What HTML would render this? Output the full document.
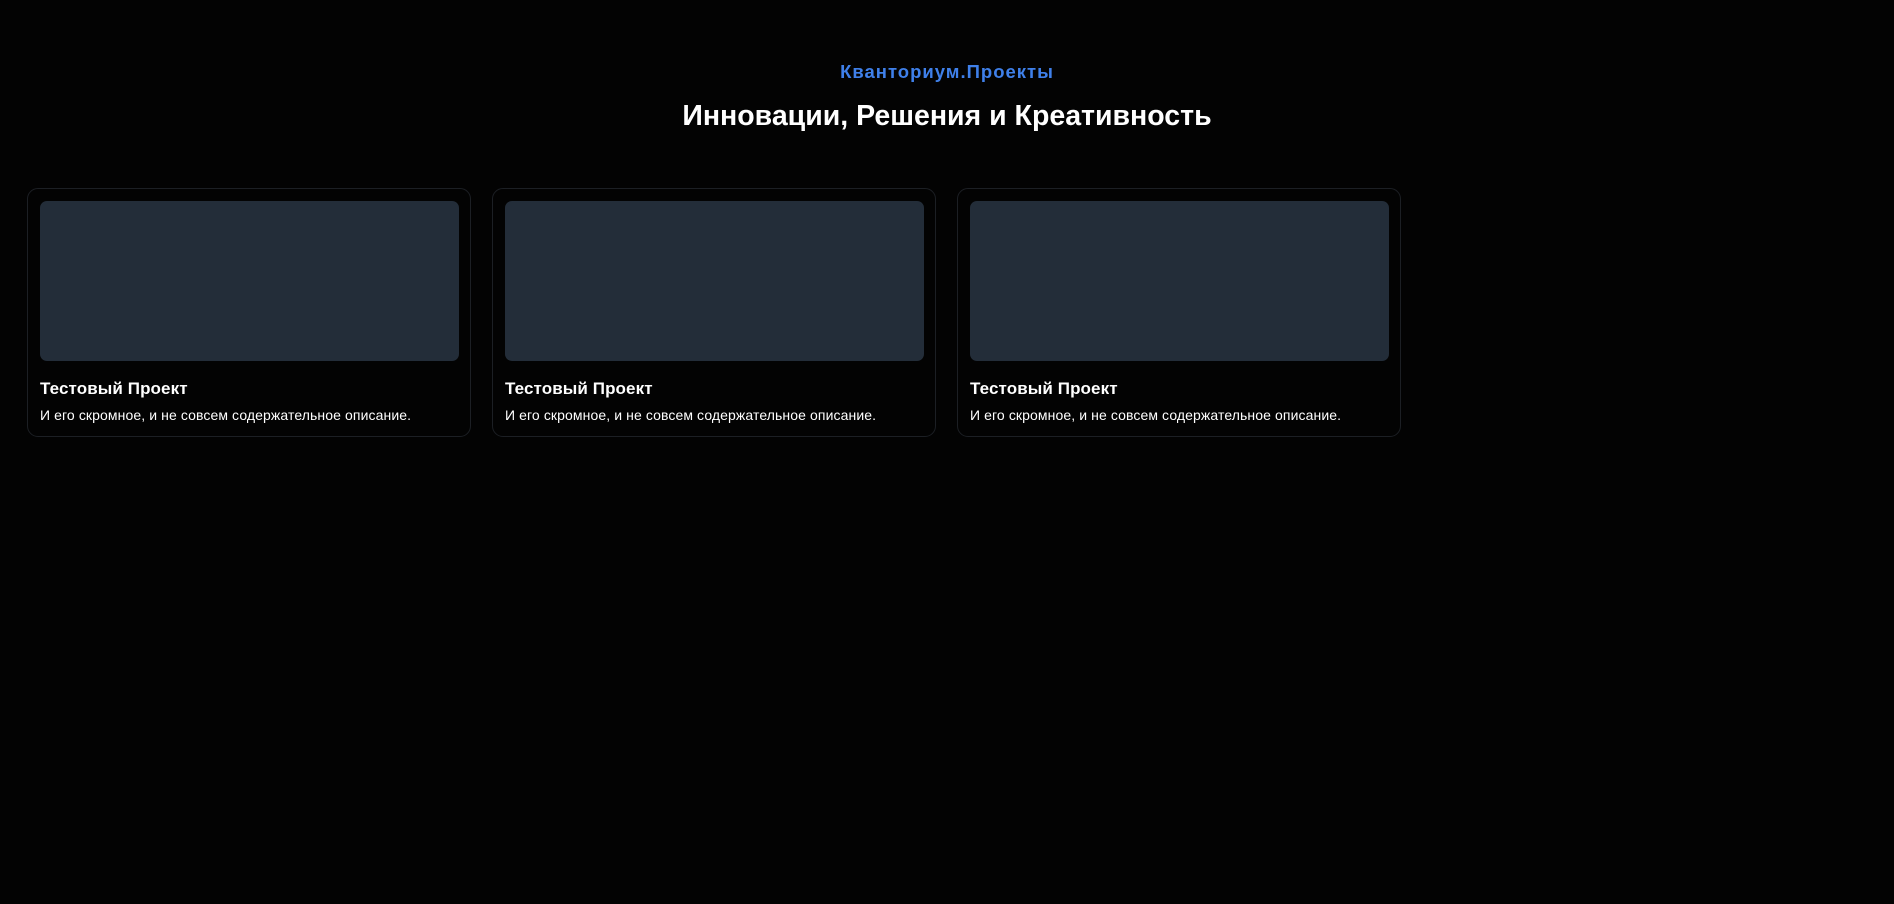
<!DOCTYPE html>
<html><head><meta charset="utf-8"><style>
html,body{margin:0;padding:0;background:#030303;width:1894px;height:904px;overflow:hidden;font-family:"Liberation Sans",sans-serif;color:#fff}
.sub{position:absolute;left:0;width:1894px;top:61px;text-align:center;font-size:18.5px;font-weight:bold;color:#3f80ea;letter-spacing:1px}
.h{position:absolute;left:0;width:1894px;top:100px;text-align:center;font-size:28.5px;font-weight:bold;color:#fff;letter-spacing:0}
.card{position:absolute;top:188px;width:444px;height:249px;border:1px solid #1c1f24;border-radius:11px;background:#030303;box-sizing:border-box}
.img{position:absolute;left:12px;top:12px;width:419px;height:160px;background:#232d39;border-radius:7px}
.t{position:absolute;left:12px;top:190px;font-size:17px;font-weight:bold;letter-spacing:0.1px}
.d{position:absolute;left:12px;top:218px;font-size:14px;letter-spacing:0.1px}
</style></head><body>
<div class="sub">Кванториум.Проекты</div>
<div class="h">Инновации, Решения и Креативность</div>
<div class="card" style="left:27px"><div class="img"></div><div class="t">Тестовый Проект</div><div class="d">И его скромное, и не совсем содержательное описание.</div></div>
<div class="card" style="left:492px"><div class="img"></div><div class="t">Тестовый Проект</div><div class="d">И его скромное, и не совсем содержательное описание.</div></div>
<div class="card" style="left:957px"><div class="img"></div><div class="t">Тестовый Проект</div><div class="d">И его скромное, и не совсем содержательное описание.</div></div>
</body></html>
